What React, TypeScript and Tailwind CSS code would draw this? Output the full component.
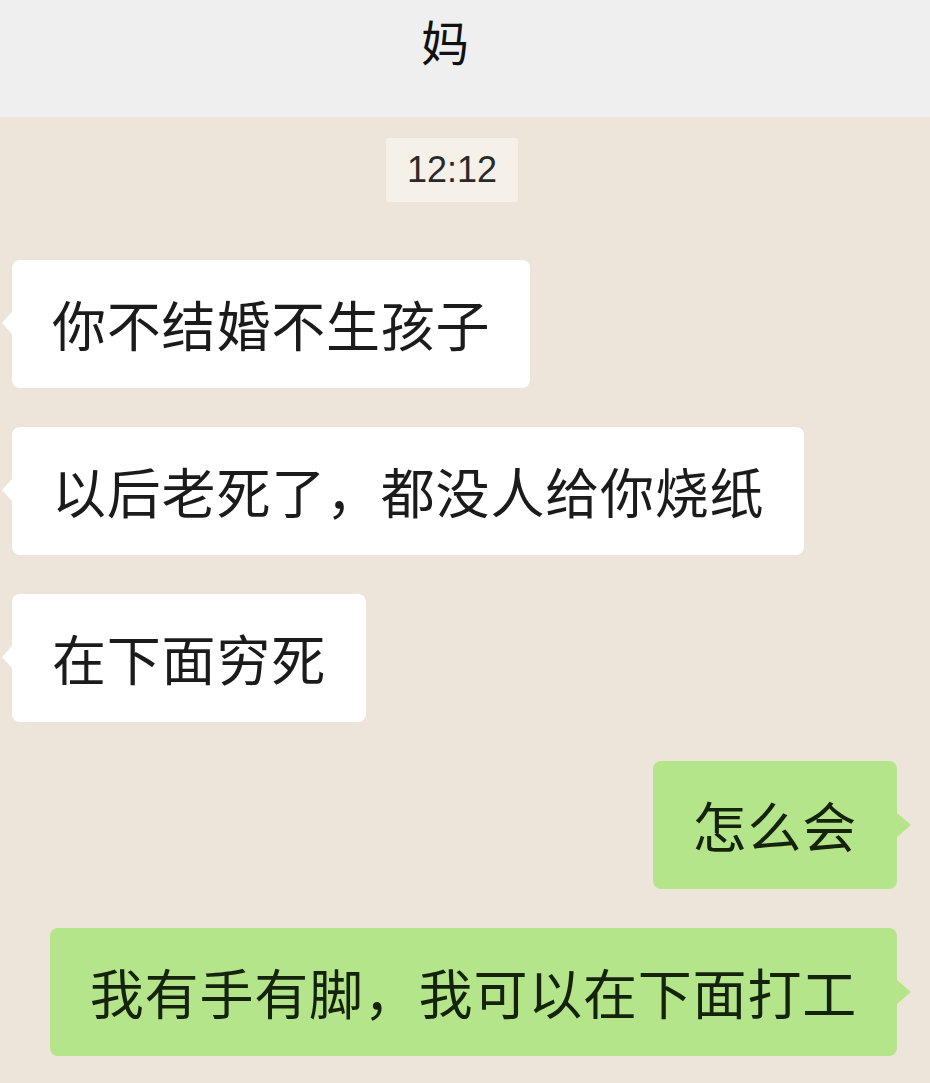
import React from "react";

const cjk = { fontFamily: '"Noto Sans CJK SC", "Noto Sans", sans-serif' };

function Left({ text }: { text: string }) {
  return (
    <div className="flex justify-start pl-[12px]">
      <div
        className="relative flex h-[128px] items-center rounded-[8px] bg-white pl-[40px] pr-[40px] text-[54px] leading-none tracking-[0.8px] text-[#1b1b1b]"
        style={cjk}
      >
        <span className="absolute left-[-10px] top-[52px] h-0 w-0 border-y-[11px] border-r-[10px] border-y-transparent border-r-white" />
        <span>{text}</span>
      </div>
    </div>
  );
}

function Right({ text }: { text: string }) {
  return (
    <div className="flex justify-end pr-[33px]">
      <div
        className="relative flex h-[128px] items-center rounded-[8px] bg-[#b4e58a] pl-[40px] pr-[40px] text-[54px] leading-none tracking-[0.8px] text-[#15230c]"
        style={cjk}
      >
        <span className="absolute right-[-14px] top-[52px] h-0 w-0 border-y-[12px] border-l-[14px] border-y-transparent border-l-[#b4e58a]" />
        <span>{text}</span>
      </div>
    </div>
  );
}

export default function App() {
  return (
    <div className="flex h-[1083px] w-full flex-col overflow-hidden bg-[#ede5da]">
      <div className="h-[117px] shrink-0 bg-[#efefef] pr-[40px] text-center">
        <div className="text-[48px] leading-[80px] text-[#111]" style={cjk}>
          妈
        </div>
      </div>
      <div className="mt-[21px] flex justify-center pr-[26px]">
        <div
          className="flex h-[64px] items-center rounded-[4px] bg-[#f6f1e8] px-[21px] text-[36px] leading-none text-[#2a2a2a]"
          style={{ fontFamily: '"Liberation Sans", Arial, sans-serif' }}
        >
          12:12
        </div>
      </div>
      <div className="mt-[58px] flex flex-col gap-[39px]">
        <Left text="你不结婚不生孩子" />
        <Left text="以后老死了，都没人给你烧纸" />
        <Left text="在下面穷死" />
        <Right text="怎么会" />
        <Right text="我有手有脚，我可以在下面打工" />
      </div>
    </div>
  );
}
